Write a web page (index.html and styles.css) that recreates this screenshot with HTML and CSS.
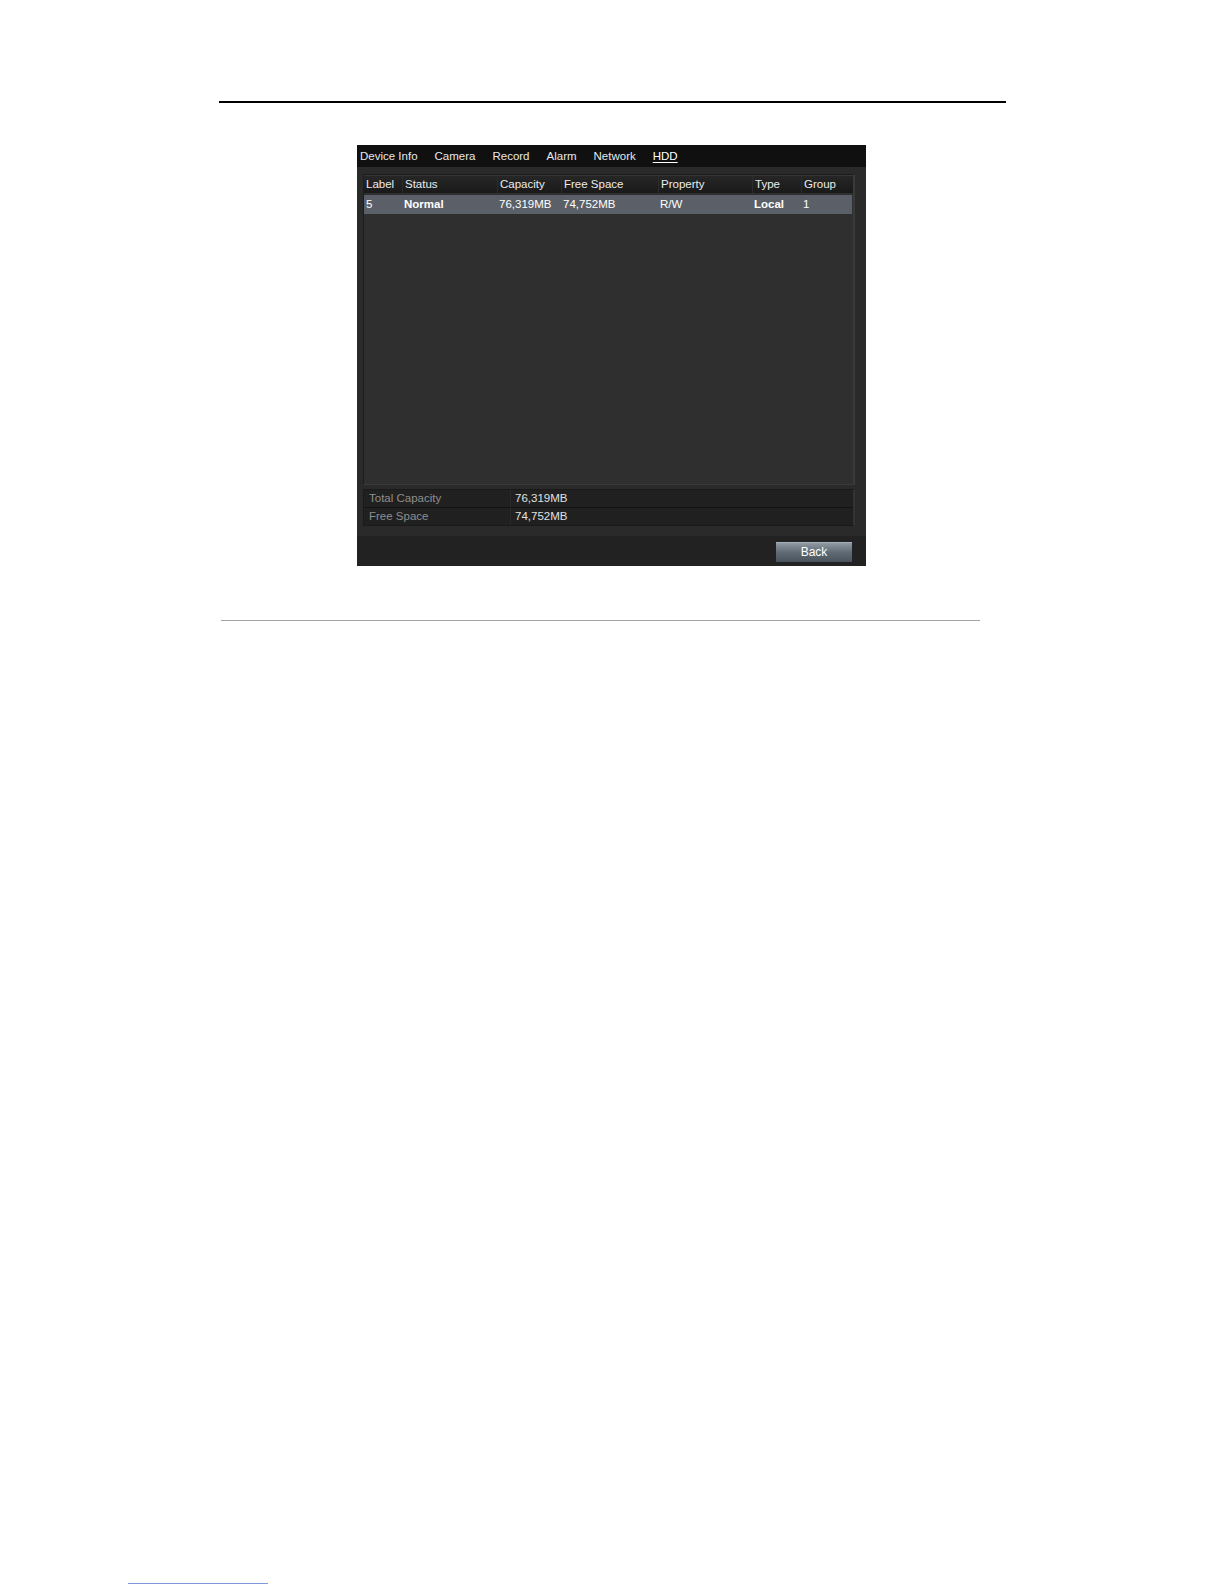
FILE: index.html
```html
<!DOCTYPE html>
<html>
<head>
<meta charset="utf-8">
<link rel="stylesheet" href="styles.css">
</head>
<body>
<div class="page">
  <div class="rule-top"></div>
  <div class="panel">
    <div class="tabs">
      <span class="tab">Device Info</span>
      <span class="tab">Camera</span>
      <span class="tab">Record</span>
      <span class="tab">Alarm</span>
      <span class="tab">Network</span>
      <span class="tab active">HDD</span>
    </div>
    <div class="body">
      <div class="table">
        <div class="row head">
          <div class="cell">Label</div>
          <div class="cell">Status</div>
          <div class="cell">Capacity</div>
          <div class="cell">Free Space</div>
          <div class="cell">Property</div>
          <div class="cell">Type</div>
          <div class="cell">Group</div>
        </div>
        <div class="row selected">
          <div class="cell">5</div>
          <div class="cell bold">Normal</div>
          <div class="cell">76,319MB</div>
          <div class="cell">74,752MB</div>
          <div class="cell">R/W</div>
          <div class="cell bold">Local</div>
          <div class="cell">1</div>
        </div>
      </div>
      <div class="summary">
        <div class="srow">
          <div class="slabel">Total Capacity</div>
          <div class="svalue">76,319MB</div>
        </div>
        <div class="srow">
          <div class="slabel">Free Space</div>
          <div class="svalue">74,752MB</div>
        </div>
      </div>
    </div>
    <div class="footer">
      <div class="btn">Back</div>
    </div>
  </div>
  <div class="rule-bottom"></div>
  <div class="link-line"></div>
</div>
</body>
</html>
```

FILE: styles.css
```css
* { box-sizing: border-box; }
html, body { margin: 0; padding: 0; background: #ffffff; }
body { font-family: "Liberation Sans", Arial, sans-serif; }

.page {
  width: 1224px;
  height: 1584px;
  padding-top: 101px;
  display: flex;
  flex-direction: column;
}

.rule-top {
  margin-left: 219px;
  width: 787px;
  height: 2px;
  background: #000;
}

.panel {
  margin-top: 42px;
  margin-left: 357px;
  width: 509px;
  height: 421px;
  background: #2a2a2a;
  display: flex;
  flex-direction: column;
  font-size: 11.5px;
  color: #e6e6e6;
}

.tabs {
  height: 22px;
  background: #101010;
  display: flex;
  align-items: center;
  gap: 17px;
  padding-left: 3px;
  padding-top: 1px;
  flex-shrink: 0;
}
.tab { color: #e8e8e8; line-height: 14px; }
.tab.active {
  text-decoration: underline;
  text-underline-offset: 2px;
  color: #ffffff;
}

.body {
  flex: 1;
  padding: 7px 11px 10px 6px;
  display: flex;
  flex-direction: column;
  gap: 4px;
}

.table {
  height: 311px;
  background: #2f2f2f;
  border: 1px solid #1c1c1c;
  border-right: 2px solid #3a3a3a;
  border-bottom: 1px solid #3a3a3a;
  display: flex;
  flex-direction: column;
  gap: 2px;
}

.row {
  display: grid;
  grid-template-columns: 38px 95px 64px 97px 94px 49px 52px;
}
.row.head {
  height: 18px;
  background: linear-gradient(#262626, #1a1a1a);
  border-top: 1px solid #363636;
}
.row.head .cell {
  border-left: 1px solid #2c2c2c;
  color: #ececec;
}
.row.head .cell:first-child { border-left: none; }
.row.selected {
  height: 19px;
  background: #5b6068;
  margin-right: 1px;
}
.cell {
  padding-left: 2px;
  display: flex;
  align-items: center;
  white-space: nowrap;
}
.row.selected .cell { color: #ffffff; }
.cell.bold { font-weight: bold; }

.summary {
  height: 37px;
  background: #202020;
  border: 1px solid #1a1a1a;
  border-right: 2px solid #333;
  display: flex;
  flex-direction: column;
}
.srow {
  flex: 1;
  display: grid;
  grid-template-columns: 147px 1fr;
}
.srow + .srow { border-top: 1px solid #141414; }
.slabel {
  padding-left: 5px;
  color: #8e8e8e;
  display: flex;
  align-items: center;
  border-right: 1px solid #2a2a2a;
}
.svalue {
  padding-left: 4px;
  color: #e0e0e0;
  display: flex;
  align-items: center;
}

.footer {
  height: 30px;
  background: #222222;
  display: flex;
  justify-content: flex-end;
  align-items: center;
  padding-right: 14px;
  padding-top: 2px;
  flex-shrink: 0;
}
.btn {
  width: 76px;
  height: 20px;
  background: linear-gradient(#8e99a3, #5f6a74 50%, #4a535c);
  border-top: 1px solid #a5b0ba;
  color: #ffffff;
  font-size: 12px;
  display: flex;
  align-items: center;
  justify-content: center;
}

.rule-bottom {
  margin-top: 54px;
  margin-left: 221px;
  width: 759px;
  height: 2px;
  background: #a3a3a3;
}

.link-line {
  margin-top: 962px;
  margin-left: 128px;
  width: 140px;
  height: 1px;
  background: #7f98dc;
}
```
